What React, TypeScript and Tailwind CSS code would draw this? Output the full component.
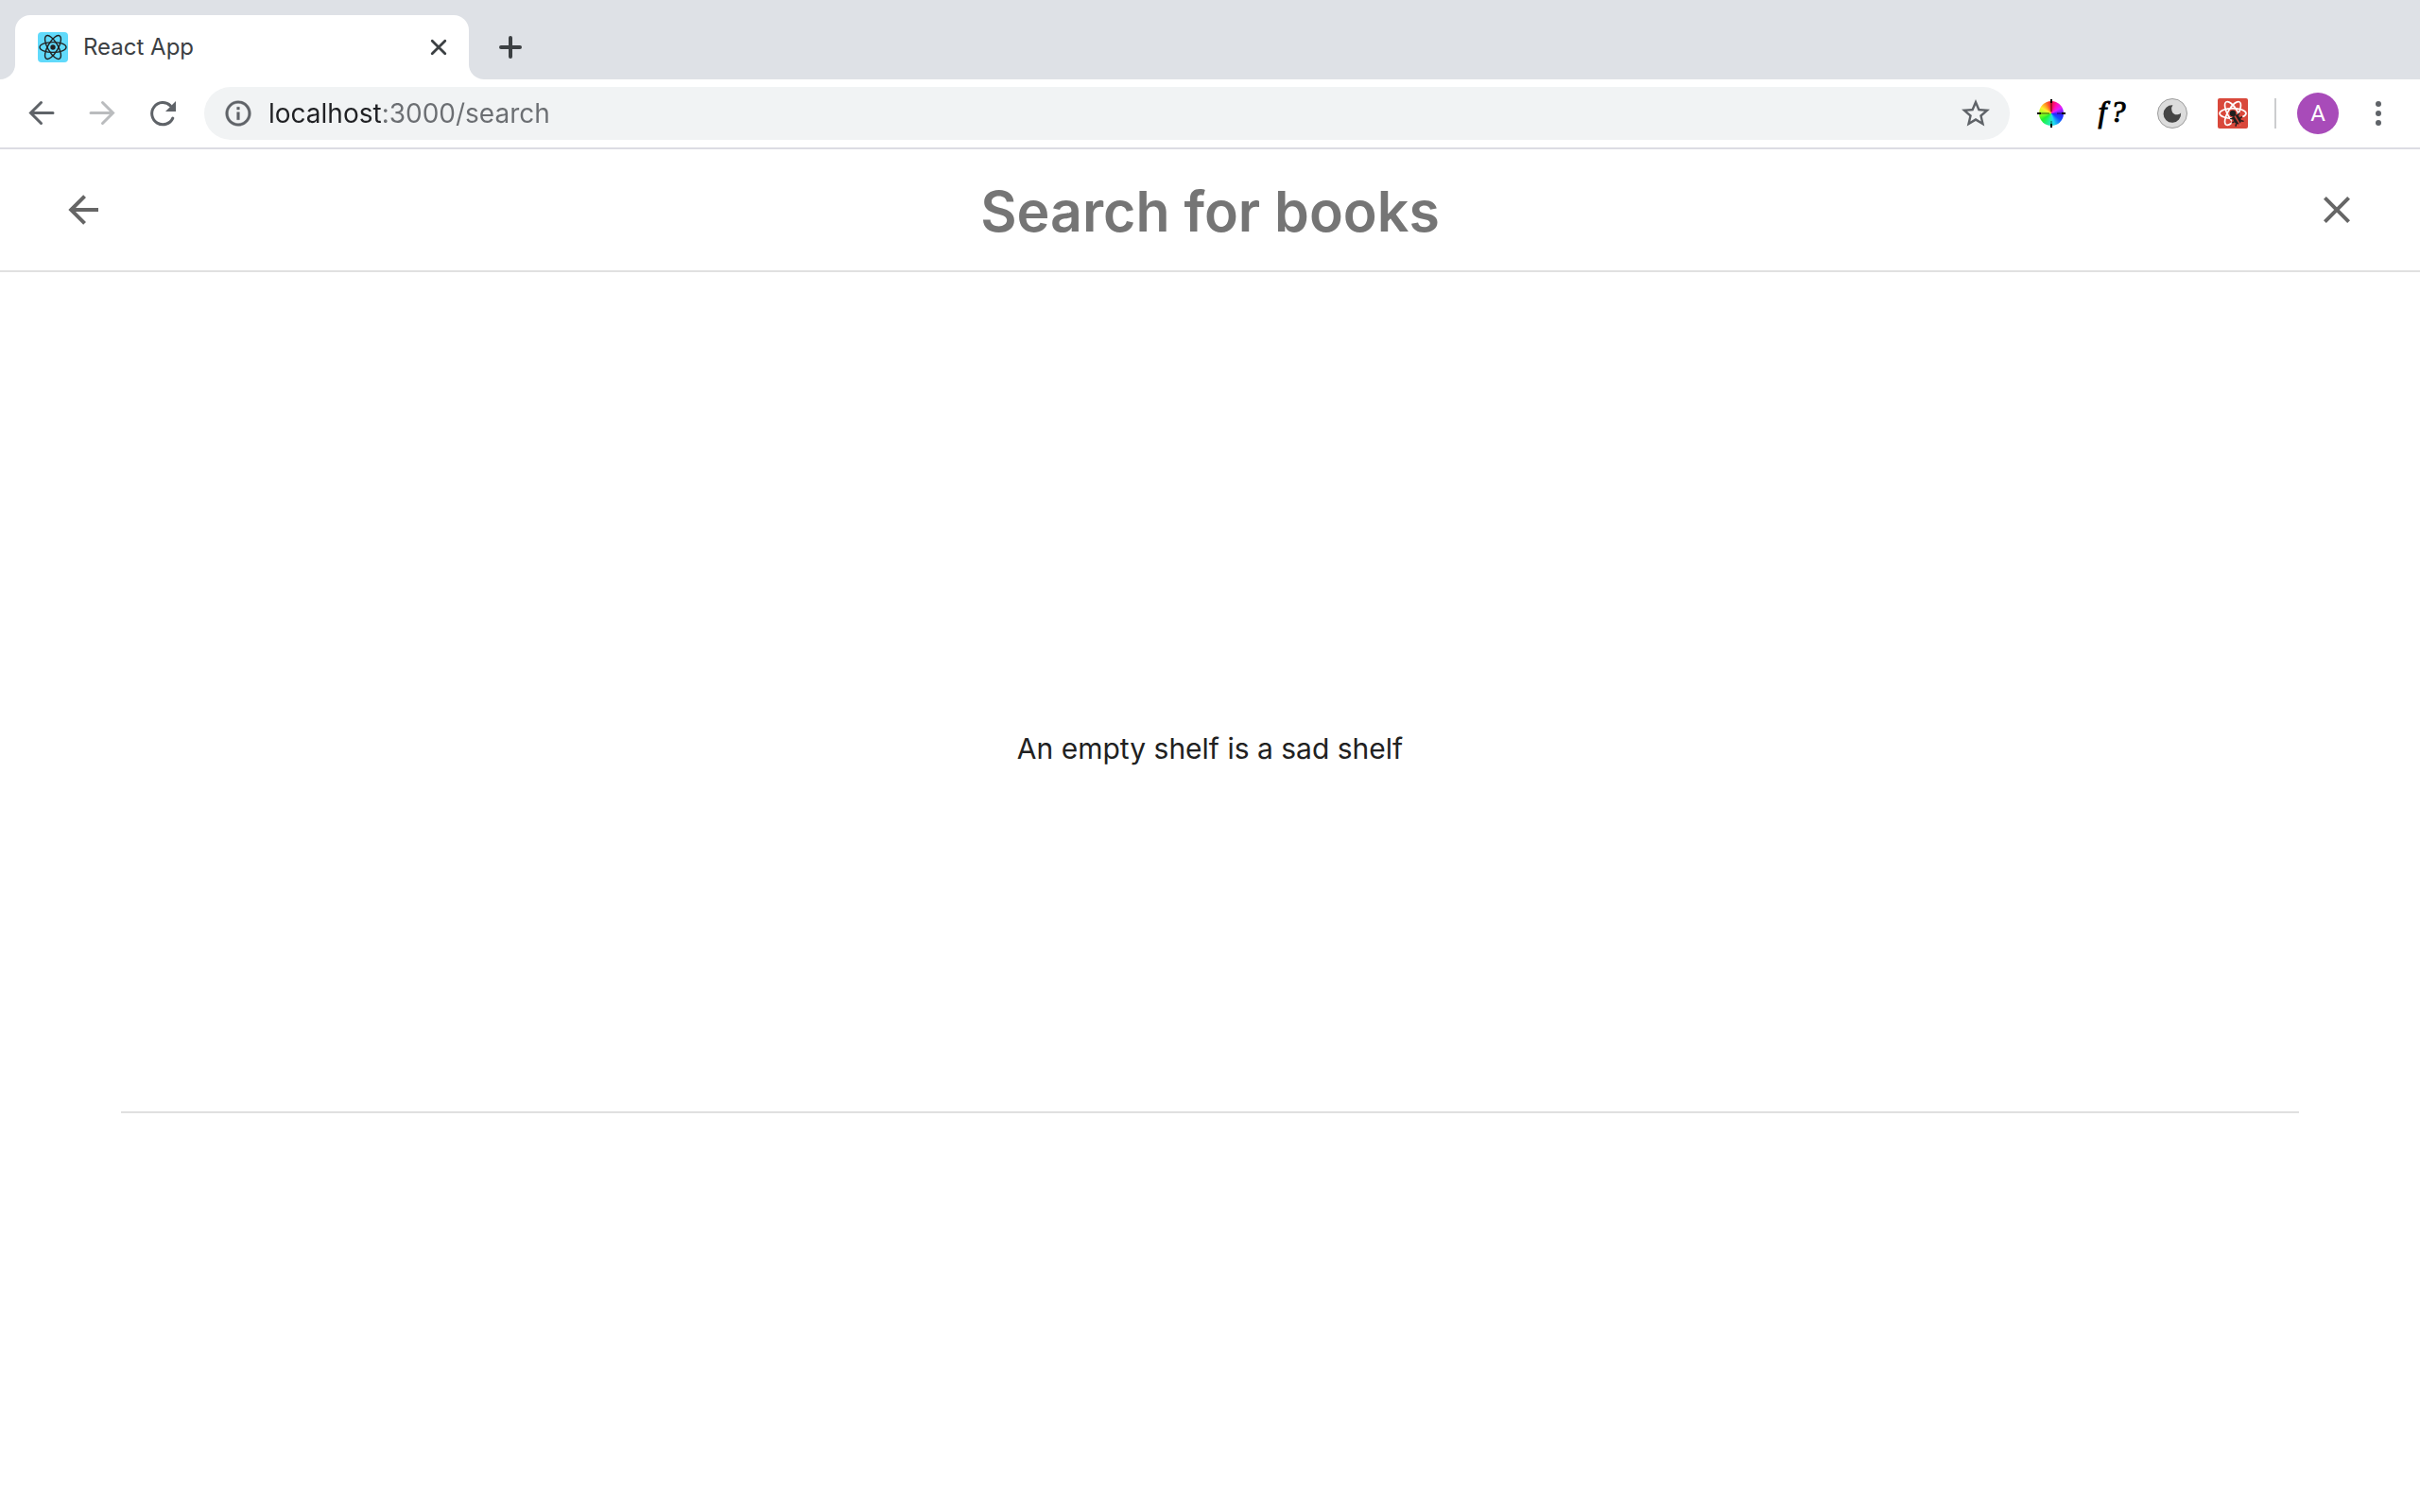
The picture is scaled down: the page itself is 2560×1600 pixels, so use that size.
import type { ReactNode } from "react";

function Atom({ className, strokeWidth }: { className?: string; strokeWidth: number }) {
  return (
    <g className={className} fill="none" stroke="currentColor" strokeWidth={strokeWidth}>
      <ellipse cx="16" cy="16" rx="14" ry="5.4" />
      <ellipse cx="16" cy="16" rx="14" ry="5.4" transform="rotate(60 16 16)" />
      <ellipse cx="16" cy="16" rx="14" ry="5.4" transform="rotate(120 16 16)" />
    </g>
  );
}

function ReactFavicon() {
  return (
    <svg viewBox="0 0 32 32" className="size-8 shrink-0" aria-hidden="true">
      <rect width="32" height="32" rx="4" fill="#61dafb" />
      <Atom className="text-[#222]" strokeWidth={1.4} />
      <circle cx="16" cy="16" r="2.7" fill="#222" />
    </svg>
  );
}

function ColorWheel() {
  return (
    <span className="relative block size-8">
      <span className="absolute inset-[3px] rounded-full bg-[conic-gradient(#f4103a,#ff10b0_30deg,#e020ff_60deg,#3020ff_95deg,#1050ff_125deg,#20d8f0_165deg,#20f0a0_195deg,#20f030_235deg,#90ff20_265deg,#fff030_300deg,#ff9020_328deg,#f4103a)]" />
      <svg viewBox="0 0 32 32" className="absolute inset-0 size-8" aria-hidden="true">
        <path d="M16 5V14M16 24V27M5 16H14M22 16H27" stroke="#000" strokeOpacity=".45" strokeWidth="1.4" />
        <path d="M16 1V5M16 27V31M1 16H5M27 16H31" stroke="#000" strokeWidth="2" />
      </svg>
    </span>
  );
}

function Moon() {
  return (
    <svg viewBox="0 0 32 32" className="size-8" aria-hidden="true">
      <circle cx="16" cy="16" r="15.5" fill="#dcdcdc" stroke="#9c9c9c" />
      <path
        d="M16.5 7.2A9.3 9.3 0 1 0 25.1 15.4A5.9 5.9 0 0 1 21.6 17.3A5.6 5.6 0 0 1 15.3 12.4A6.2 6.2 0 0 1 16.5 7.2Z"
        fill="#454545"
      />
    </svg>
  );
}

function ReactBug() {
  return (
    <svg viewBox="0 0 32 32" className="size-8" aria-hidden="true">
      <rect width="32" height="32" rx="2" fill="#d9483b" />
      <Atom className="text-white" strokeWidth={1.7} />
      <path d="M15 21L24 15.5L29 24L21 31L14.5 29Z" fill="#d9483b" />
      <circle cx="16" cy="16" r="3.2" fill="#1e1e1e" />
      <g transform="rotate(-32 20 22)" fill="#1e1e1e" stroke="#1e1e1e">
        <path d="M17 18H19.2V27.5Q16.8 27 16.4 24Z M21 18H23.2L23.8 24Q23.4 27 21 27.5Z" strokeWidth=".3" />
        <path d="M17 19.5L14.4 18M16.5 23H14M17 26L15 28M23.2 19.5L25.8 18M23.7 23H26.2M23.2 26L25.2 28" fill="none" strokeWidth="1.4" />
      </g>
    </svg>
  );
}

function ToolButton({ label, children }: { label: string; children: ReactNode }) {
  return (
    <button type="button" aria-label={label} className="flex size-16 shrink-0 items-center justify-center">
      {children}
    </button>
  );
}

function TabStrip() {
  return (
    <div className="flex h-21 items-end bg-[#dee1e6]">
      <div className="size-4 bg-white">
        <div className="size-4 rounded-br-2xl bg-[#dee1e6]" />
      </div>
      <div className="flex h-17 w-120 items-center rounded-t-2xl bg-white pr-4 pl-6">
        <ReactFavicon />
        <span className="ml-4 flex-1 text-2xl text-[#3c4043]">React App</span>
        <button type="button" aria-label="Close tab" className="flex size-8 items-center justify-center">
          <svg viewBox="0 0 32 32" className="size-8" fill="none" stroke="#3c4043" strokeWidth="2.8" strokeLinecap="round" aria-hidden="true">
            <path d="M9.2 9.2L22.8 22.8M22.8 9.2L9.2 22.8" />
          </svg>
        </button>
      </div>
      <div className="size-4 bg-white">
        <div className="size-4 rounded-bl-2xl bg-[#dee1e6]" />
      </div>
      <button type="button" aria-label="New tab" className="flex h-17 w-14 items-center justify-center">
        <svg viewBox="0 0 32 32" className="size-8" fill="none" stroke="#3c4043" strokeWidth="4" strokeLinecap="round" aria-hidden="true">
          <path d="M16 6V26M6 16H26" />
        </svg>
      </button>
    </div>
  );
}

function Toolbar() {
  return (
    <div className="flex items-center border-b-2 border-[#dcdce3] bg-white py-1 pr-[22px] pl-3">
      <ToolButton label="Back">
        <svg viewBox="0 0 32 32" className="size-8" fill="none" stroke="#5f6368" strokeWidth="3" strokeLinecap="round" aria-hidden="true">
          <path d="M28 15.5H5M15.5 4.5L4.5 15.5L15.5 26.5" />
        </svg>
      </ToolButton>
      <ToolButton label="Forward">
        <svg viewBox="0 0 32 32" className="size-8" fill="none" stroke="#babcbe" strokeWidth="3" strokeLinecap="round" aria-hidden="true">
          <path d="M4 15.5H27M16.5 4.5L27.5 15.5L16.5 26.5" />
        </svg>
      </ToolButton>
      <ToolButton label="Reload">
        <svg viewBox="0 0 32 32" className="size-8" aria-hidden="true">
          <path d="M26.8 21A11.6 11.6 0 1 1 24.3 7.8" fill="none" stroke="#5f6368" strokeWidth="3" strokeLinecap="round" />
          <path d="M30 3V14H19Z" fill="#5f6368" />
        </svg>
      </ToolButton>
      <div className="ml-3 flex h-14 flex-1 items-center rounded-full bg-[#f1f3f4] pr-[18px] pl-5">
        <button type="button" aria-label="View site information" className="shrink-0">
          <svg viewBox="0 0 24 24" className="size-8" fill="#5f6368" aria-hidden="true">
            <path d="M11 7h2v2h-2zm0 4h2v6h-2zm1-9C6.48 2 2 6.48 2 12s4.48 10 10 10 10-4.48 10-10S17.52 2 12 2zm0 18c-4.41 0-8-3.59-8-8s3.59-8 8-8 8 3.59 8 8-3.59 8-8 8z" stroke="#5f6368" strokeWidth=".3" />
          </svg>
        </button>
        <input
          aria-label="Address"
          defaultValue="localhost:3000/search"
          className="ml-4 min-w-0 flex-1 bg-[linear-gradient(90deg,#202124_120px,#6b6e72_120px)] bg-clip-text text-[28px] text-transparent outline-none"
        />
        <button type="button" aria-label="Bookmark this tab" className="shrink-0">
          <svg viewBox="0 0 24 24" className="size-9" fill="#5f6368" aria-hidden="true">
            <path d="M22 9.24l-7.19-.62L12 2 9.19 8.63 2 9.24l5.46 4.73L5.82 21 12 17.27 18.18 21l-1.63-7.03L22 9.24zM12 15.4l-3.76 2.27 1-4.28-3.32-2.88 4.38-.38L12 6.1l1.71 4.04 4.38.38-3.32 2.88 1 4.28L12 15.4z" />
          </svg>
        </button>
      </div>
      <div className="ml-3 flex items-center">
        <ToolButton label="Color picker">
          <ColorWheel />
        </ToolButton>
        <ToolButton label="Identify font">
          <span className="flex gap-1 pb-1 font-['Liberation_Serif',serif] text-[32px] text-black italic [-webkit-text-stroke:1px_black]">
            <span>f</span>
            <span>?</span>
          </span>
        </ToolButton>
        <ToolButton label="Dark mode">
          <Moon />
        </ToolButton>
        <ToolButton label="React developer tools">
          <ReactBug />
        </ToolButton>
        <div className="ml-3 h-8 w-[2px] bg-[#cccdcf]" />
        <button
          type="button"
          aria-label="Profile"
          className="ml-[22px] flex size-11 items-center justify-center rounded-full bg-[#a84bb9] font-[Roboto,sans-serif] text-2xl text-white"
        >
          A
        </button>
        <ToolButton label="Menu">
          <svg viewBox="0 0 32 32" className="ml-5 size-8" fill="#5f6368" aria-hidden="true">
            <circle cx="16" cy="6" r="3" />
            <circle cx="16" cy="16" r="3" />
            <circle cx="16" cy="26" r="3" />
          </svg>
        </ToolButton>
      </div>
    </div>
  );
}

function SearchHeader() {
  return (
    <header className="flex h-[130px] items-center border-b-2 border-[#e0e0e0] px-16">
      <button type="button" aria-label="Go back" className="shrink-0">
        <svg viewBox="0 0 24 24" className="size-12" fill="#666" aria-hidden="true">
          <path d="M20,11V13H8L13.5,18.5L12.08,19.92L4.16,12L12.08,4.08L13.5,5.5L8,11H20Z" />
        </svg>
      </button>
      <input
        type="text"
        aria-label="Search for books"
        placeholder="Search for books"
        className="min-w-0 flex-1 pt-1 text-center text-[59px] leading-20 font-semibold text-[#202124] outline-none placeholder:text-[#757575]"
      />
      <button type="button" aria-label="Clear search" className="shrink-0">
        <svg viewBox="0 0 24 24" className="size-12" fill="#666" aria-hidden="true">
          <path d="M19,6.41L17.59,5L12,10.59L6.41,5L5,6.41L10.59,12L5,17.59L6.41,19L12,13.41L17.59,19L19,17.59L13.41,12L19,6.41Z" />
        </svg>
      </button>
    </header>
  );
}

export default function App() {
  return (
    <div className="min-h-screen bg-white font-[Inter,sans-serif]">
      <TabStrip />
      <Toolbar />
      <SearchHeader />
      <main className="px-32 pt-30">
        <section className="box-content flex min-h-[48vh] items-center justify-center border-b-2 border-[#e0e0e0]">
          <p className="text-[30px] text-[#212121]">An empty shelf is a sad shelf</p>
        </section>
      </main>
    </div>
  );
}
